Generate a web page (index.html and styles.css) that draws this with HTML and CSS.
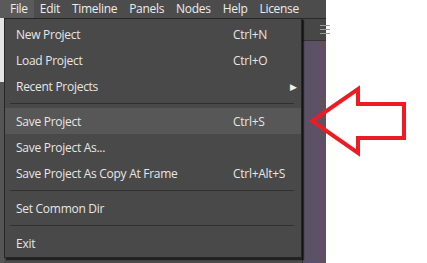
FILE: index.html
```html
<!DOCTYPE html>
<html lang="en">
<head>
    <meta charset="UTF-8">
    <title>File menu</title>
    <link rel="stylesheet" href="styles.css">
</head>
<body>
    <div class="app">
        <div class="menubar">
            <span class="menubar-item active">File</span>
            <span class="menubar-item">Edit</span>
            <span class="menubar-item">Timeline</span>
            <span class="menubar-item">Panels</span>
            <span class="menubar-item">Nodes</span>
            <span class="menubar-item">Help</span>
            <span class="menubar-item">License</span>
        </div>
        <div class="workspace">
            <div class="side-strip">
                <div class="side-light"></div>
            </div>
            <div class="center"></div>
            <div class="right-panel">
                <div class="panel-toolbar">
                    <svg width="10" height="9" viewBox="0 0 10 9">
                        <rect x="0" y="0" width="10" height="1" fill="#9a9a9a"/>
                        <rect x="0" y="4" width="10" height="1" fill="#9a9a9a"/>
                        <rect x="0" y="8" width="10" height="1" fill="#9a9a9a"/>
                    </svg>
                </div>
                <div class="panel-view"></div>
            </div>
        </div>

        <div class="dropdown">
            <div class="item"><span class="label">New Project</span><span class="shortcut">Ctrl+N</span></div>
            <div class="item"><span class="label">Load Project</span><span class="shortcut">Ctrl+O</span></div>
            <div class="item"><span class="label">Recent Projects</span><span class="submenu">&#9654;</span></div>
            <div class="separator"></div>
            <div class="item hover"><span class="label">Save Project</span><span class="shortcut">Ctrl+S</span></div>
            <div class="item"><span class="label">Save Project As...</span></div>
            <div class="item"><span class="label">Save Project As Copy At Frame</span><span class="shortcut">Ctrl+Alt+S</span></div>
            <div class="separator"></div>
            <div class="item"><span class="label">Set Common Dir</span></div>
            <div class="separator"></div>
            <div class="item"><span class="label">Exit</span></div>
        </div>
    </div>

    <svg class="pointer" width="427" height="263" viewBox="0 0 427 263">
        <polygon points="312,121 358,89 358,104 404,104 404,138 358,138 358,153"
                 fill="none" stroke="#ed1c24" stroke-width="4" stroke-linejoin="miter"/>
    </svg>
</body>
</html>
```

FILE: styles.css
```css
body {
    margin: 0;
    background-color: #ffffff;
    font-family: "Open Sans", "Noto Sans", sans-serif;
    width: 427px;
    height: 263px;
    overflow: hidden;
    position: relative;
}

.app {
    position: relative;
    width: 326px;
    height: 263px;
    background-color: #4a4a4a;
    display: flex;
    flex-direction: column;
}

.menubar {
    height: 18px;
    display: flex;
    align-items: center;
    background-color: #4c4c4c;
    color: #ececec;
    font-size: 12px;
    letter-spacing: -0.3px;
}

.menubar-item {
    height: 18px;
    line-height: 18px;
    padding: 0 6px;
}

.menubar-item:first-child {
    padding-left: 10px;
}

.menubar-item.active {
    background-color: #5a5a5a;
}

.workspace {
    flex: 1;
    display: flex;
}

.side-strip {
    width: 4px;
    background-color: #555555;
}

.side-light {
    height: 64px;
    background-color: #e4e4e4;
}

.center {
    flex: 1;
    background-color: #4b4b4b;
}

.right-panel {
    width: 23px;
    display: flex;
    flex-direction: column;
    border-left: 1px solid #2e2e2e;
}

.panel-toolbar {
    height: 21px;
    border-top: 1px solid #2a2a2a;
    background-color: #474747;
    display: flex;
    align-items: center;
    justify-content: flex-end;
    border-bottom: 1px solid #333;
}

.panel-toolbar svg {
    margin-right: -4px;
}

.panel-view {
    flex: 1;
    background-color: #584e66;
    background-image:
        linear-gradient(45deg, rgba(128, 82, 70, 0.5) 25%, transparent 25%, transparent 75%, rgba(128, 82, 70, 0.5) 75%),
        linear-gradient(45deg, rgba(128, 82, 70, 0.5) 25%, transparent 25%, transparent 75%, rgba(128, 82, 70, 0.5) 75%);
    background-size: 2px 2px;
    background-position: 0 0, 1px 1px;
}

.dropdown {
    position: absolute;
    left: 4px;
    top: 18px;
    width: 296px;
    padding: 2px 0 1px;
    background-color: #494949;
    border: 1px solid #262626;
    box-shadow: 2px 2px 1px rgba(0, 0, 0, 0.55);
    color: #e6e6e6;
    font-size: 12px;
    letter-spacing: -0.28px;
}

.item {
    height: 26px;
    display: flex;
    align-items: center;
    padding-left: 11px;
    position: relative;
}

.item.hover {
    background-color: #575757;
}

.label {
    flex: 1;
}

.shortcut {
    position: absolute;
    left: 228px;
}

.submenu {
    position: absolute;
    left: 285px;
    font-size: 9px;
    color: #f0f0f0;
}

.separator {
    height: 9px;
    display: flex;
    align-items: center;
    padding: 0 7px 0 5px;
}

.separator::before {
    content: "";
    flex: 1;
    height: 1px;
    background-color: #303030;
}

.pointer {
    position: absolute;
    left: 0;
    top: 0;
    pointer-events: none;
}
```
